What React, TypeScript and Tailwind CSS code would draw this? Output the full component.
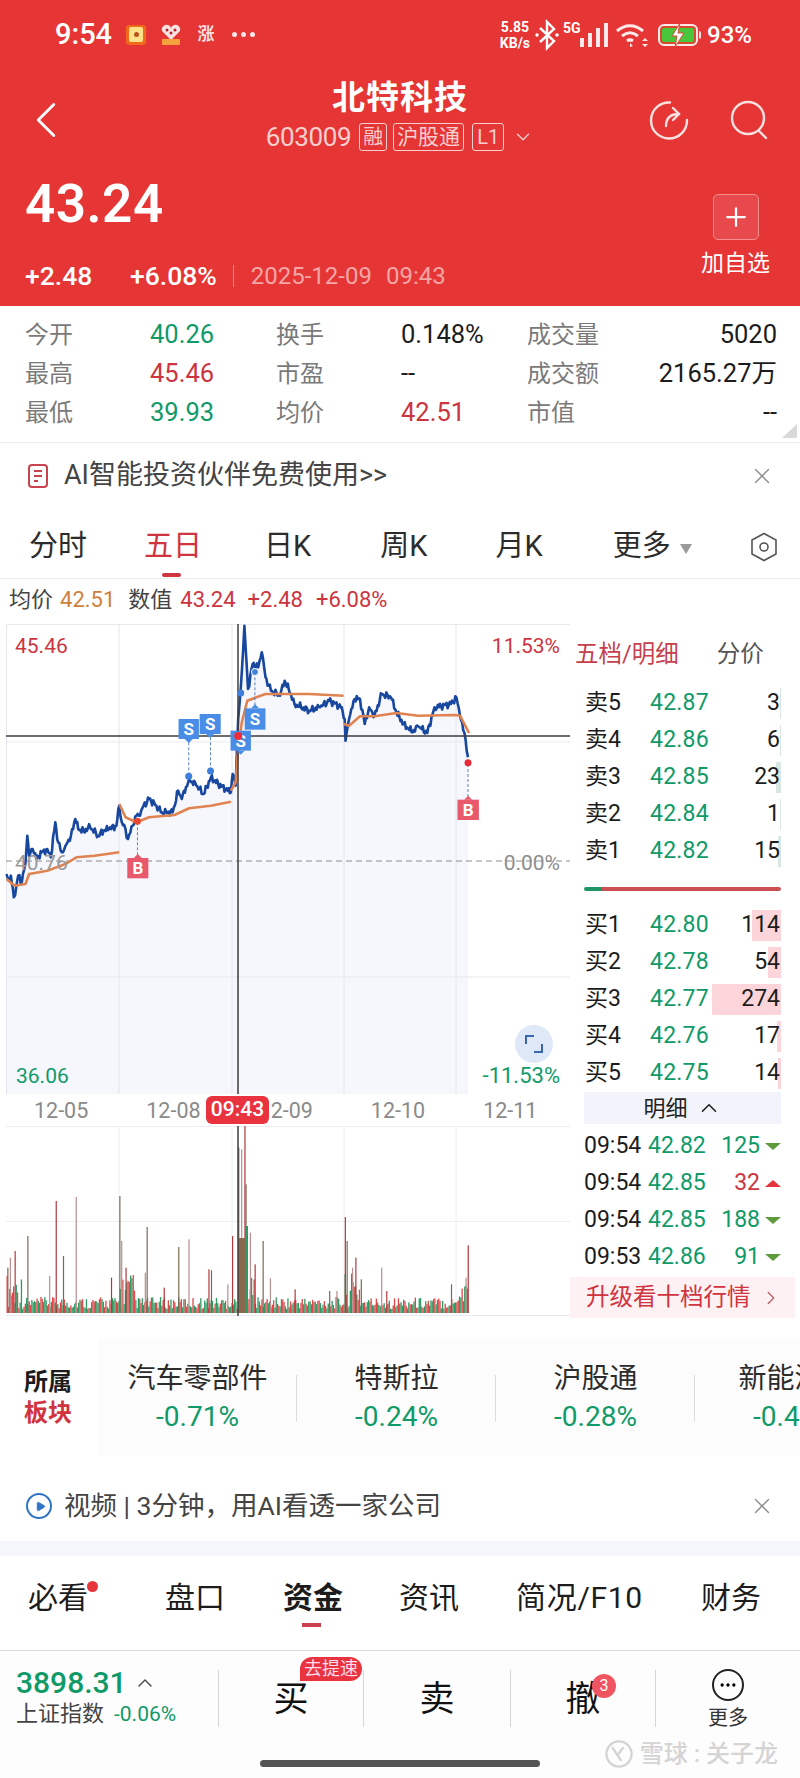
import { ChevronLeft, ChevronRight, ChevronDown, ChevronUp, Plus, X, Ellipsis, Play } from "lucide-react";

const GREEN = "text-[#0f9a68]";
const RED = "text-[#cc3440]";

// chart points were read off a 2.75x / 3x crop, hence the conversion
const fx = (x: number) => x / 2.75;
const fy = (y: number) => y / 3 - 15;

const bluePts = [
  [18, 795], [22, 810], [30, 800], [38, 865], [45, 830], [50, 800], [60, 820], [70, 760], [75, 680], [80, 740], [90, 720], [100, 750], [115, 730], [130, 720], [140, 745], [152, 640], [160, 700], [170, 730], [180, 710], [195, 680], [207, 630], [215, 660], [230, 665], [248, 655], [270, 680], [285, 665], [300, 660], [320, 650], [328, 590], [335, 640], [345, 660], [352, 690], [365, 650], [375, 620], [385, 620], [395, 590], [410, 570], [430, 590], [445, 610], [475, 610], [490, 545], [500, 570], [520, 510], [540, 530], [560, 555], [580, 505], [600, 525], [635, 550], [640, 495], [648, 530], [655, 330], [662, 240], [672, 50], [682, 240], [695, 165], [710, 175], [720, 130], [730, 205], [745, 245], [770, 260], [783, 215], [800, 255], [810, 285], [850, 305], [880, 295], [905, 275], [940, 295], [948, 330], [950, 395], [960, 330], [975, 270], [990, 270], [1003, 345], [1015, 295], [1030, 320], [1050, 255], [1075, 265], [1090, 310], [1110, 345], [1135, 370], [1150, 352], [1175, 372], [1195, 295], [1240, 285], [1255, 265], [1265, 320], [1280, 390], [1287, 445],
];

const avgSegs = [
  [[18, 810], [40, 830], [70, 825], [80, 795], [130, 785], [180, 765], [210, 745], [260, 740], [328, 730]],
  [[328, 585], [345, 625], [375, 640], [410, 625], [480, 618], [520, 598], [580, 590], [635, 578]],
  [[635, 545], [648, 520], [655, 420], [665, 340], [680, 275], [730, 255], [850, 255], [945, 260]],
  [[945, 345], [960, 350], [990, 322], [1030, 322], [1090, 312], [1150, 320], [1250, 318], [1265, 320], [1290, 372]],
];

function jagged(pts: number[][]) {
  const out: string[] = [];
  let n = 0;
  for (let i = 0; i < pts.length - 1; i++) {
    const [x0, y0] = pts[i];
    const [x1, y1] = pts[i + 1];
    const steps = Math.max(1, Math.round((x1 - x0) / 3));
    for (let s = 0; s < steps; s++) {
      const t = s / steps;
      n++;
      const noise = s === 0 ? 0 : Math.sin(n * 2.3) * 7 + Math.sin(n * 5.1) * 5;
      out.push(`${fx(x0 + (x1 - x0) * t).toFixed(1)},${fy(y0 + (y1 - y0) * t + noise).toFixed(1)}`);
    }
  }
  const last = pts[pts.length - 1];
  out.push(`${fx(last[0]).toFixed(1)},${fy(last[1]).toFixed(1)}`);
  return out.join(" ");
}

const toLine = (pts: number[][]) => pts.map(([x, y]) => `${fx(x).toFixed(1)},${fy(y).toFixed(1)}`).join(" ");

const spikes: [number, number][] = [
  [20, 540], [27, 510], [40, 490], [75, 445], [135, 565], [153, 340], [173, 505], [208, 328], [305, 570], [328, 325], [333, 460], [345, 540], [403, 418], [398, 555], [450, 600], [490, 478], [518, 455], [573, 545], [580, 548], [625, 590], [638, 445], [655, 180], [663, 185], [672, 115], [675, 290], [687, 435], [700, 530], [722, 460], [742, 572], [810, 605], [905, 610], [925, 610], [948, 388], [953, 460], [968, 540], [977, 510], [992, 575], [1048, 540], [1062, 610], [1240, 590], [1280, 570], [1286, 473],
];

function volumeBars() {
  const bars: { x: number; h: number; c: string }[] = [];
  let i = 0;
  for (let x = 6.5; x < 468; x += 1.3) {
    i++;
    const r = Math.abs(Math.sin(i * 12.9898) * 43758.5453) % 1;
    const nearOpen = [6.5, 119, 238, 344, 456].some((o) => x >= o && x < o + 16);
    const h = 4 + r * (nearOpen ? 36 : 12);
    bars.push({ x, h, c: Math.sin(i * 7.7) > 0.15 ? "#e0474a" : "#2f9a63" });
  }
  return bars;
}

function Marker({ x0, x1, y0, y1, label, up }: { x0: number; x1: number; y0: number; y1: number; label: string; up?: boolean }) {
  const l = fx(x0);
  const r = fx(x1);
  const t = fy(y0);
  const b = fy(y1);
  const c = (l + r) / 2;
  const fill = label === "S" ? "#4a8de6" : "#e85a6b";
  return (
    <g>
      <rect x={l} y={t} width={r - l} height={b - t} fill={fill} />
      {up ? (
        <polygon points={`${c - 4},${t} ${c + 4},${t} ${c},${t - 4}`} fill={fill} />
      ) : (
        <polygon points={`${c - 4},${b} ${c + 4},${b} ${c},${b + 4}`} fill={fill} />
      )}
      <text x={c} y={(t + b) / 2 + 6} textAnchor="middle" fontSize="17" fontWeight="700" fill="#fff" fontFamily="Roboto">
        {label}
      </text>
    </g>
  );
}

function Dash({ x, y0, y1 }: { x: number; y0: number; y1: number }) {
  return <line x1={fx(x)} x2={fx(x)} y1={fy(y0)} y2={fy(y1)} stroke="#5b7fb8" strokeWidth="1" strokeDasharray="3 2" />;
}

function PriceChart() {
  const blue = jagged(bluePts);
  return (
    <div className="relative h-[470px] w-[570px]">
      <svg width="570" height="470" className="absolute inset-0">
        <polygon points={`6.5,470 ${blue} 468,470`} fill="#f6f7fc" />
        {[0, 117.5, 352.5, 470].map((y) => (
          <line key={y} x1="6" x2="570" y1={y + 0.5} y2={y + 0.5} stroke="#e8e9ee" />
        ))}
        {[6.5, 119, 232, 344, 456].map((x) => (
          <line key={x} x1={x} x2={x} y1="0" y2="470" stroke="#e4e6ee" />
        ))}
        <line x1="6" x2="570" y1="237" y2="237" stroke="#8c8c8c" strokeDasharray="6 4" />
        <polyline points={blue} fill="none" stroke="#17479e" strokeWidth="2.6" strokeLinejoin="round" />
        {avgSegs.map((s, i) => (
          <polyline key={i} points={toLine(s)} fill="none" stroke="#e08350" strokeWidth="2.6" strokeLinejoin="round" />
        ))}
        <line x1="6" x2="570" y1="112" y2="112" stroke="#3d3d3d" strokeWidth="1.5" />
        <line x1="238" x2="238" y1="0" y2="470" stroke="#3d3d3d" strokeWidth="1.5" />
        <Dash x={519} y0={400} y1={500} />
        <Dash x={579} y0={385} y1={485} />
        <Dash x={701} y0={190} y1={290} />
        <Dash x={378} y0={640} y1={740} />
        <Dash x={1287} y0={465} y1={565} />
        <Marker x0={491} x1={547} y0={330} y1={390} label="S" />
        <Marker x0={549} x1={607} y0={315} y1={375} label="S" />
        <Marker x0={634} x1={690} y0={365} y1={425} label="S" />
        <Marker x0={673} x1={730} y0={298} y1={362} label="S" up />
        <Marker x0={350} x1={408} y0={747} y1={808} label="B" up />
        <Marker x0={1258} x1={1317} y0={572} y1={633} label="B" up />
        <circle cx={fx(519)} cy={fy(502)} r="3.5" fill="#3f80dd" />
        <circle cx={fx(579)} cy={fy(486)} r="3.5" fill="#3f80dd" />
        <circle cx={fx(662)} cy={fy(252)} r="3.5" fill="#3f80dd" />
        <circle cx={fx(701)} cy={fy(189)} r="3.5" fill="#3f80dd" stroke="#fff" />
        <circle cx={fx(378)} cy={fy(637)} r="3.5" fill="#e8482f" />
        <circle cx={fx(655)} cy={fy(381)} r="4" fill="#ee2c3c" />
        <circle cx={fx(1287)} cy={fy(461)} r="3.5" fill="#e8293a" />
      </svg>
      <span className={`absolute left-[15px] top-[10px] text-[21px] leading-6 ${RED}`}>45.46</span>
      <span className={`absolute right-[10px] top-[10px] text-[21px] leading-6 ${RED}`}>11.53%</span>
      <span className="absolute left-[15px] top-[227px] text-[21px] leading-6 text-[#9a9a9a]">40.76</span>
      <span className="absolute right-[10px] top-[227px] text-[21px] leading-6 text-[#8d8d8d]">0.00%</span>
      <span className={`absolute left-[16px] top-[440px] text-[21px] leading-6 ${GREEN}`}>36.06</span>
      <span className={`absolute right-[10px] top-[440px] text-[22px] leading-6 ${GREEN}`}>-11.53%</span>
      <div className="absolute left-[515px] top-[401px] flex h-[38px] w-[38px] items-center justify-center rounded-full bg-[#dfe8f7]">
        <svg width="20" height="20" viewBox="0 0 20 20" fill="none" stroke="#3a66b0" strokeWidth="2">
          <path d="M2 10V2h8M18 10v8h-8" />
        </svg>
      </div>
    </div>
  );
}

function VolumeChart() {
  return (
    <svg width="570" height="192" className="block">
      <line x1="6" x2="570" y1="0.5" y2="0.5" stroke="#eceef2" />
      <line x1="6" x2="570" y1="95.5" y2="95.5" stroke="#eceef2" />
      <line x1="6" x2="570" y1="189.5" y2="189.5" stroke="#e8e9ee" />
      {[119, 232, 344, 456].map((x) => (
        <line key={x} x1={x} x2={x} y1="0" y2="189" stroke="#eceef2" />
      ))}
      {volumeBars().map((b, i) => (
        <rect key={i} x={b.x} y={187 - b.h} width="1.3" height={b.h} fill={b.c} />
      ))}
      {spikes.map(([x, y], i) => (
        <rect key={x} x={fx(x)} y={(y - 115) / 3} width="1.2" height={187 - (y - 115) / 3} fill={i % 3 === 1 ? "#b98f8f" : i % 3 === 0 ? "#7a6a55" : "#b0393c"} />
      ))}
      <rect x="238" y="112" width="7" height="75" fill="#8a6a4e" />
      <rect x="245" y="100" width="3" height="87" fill="#2f9a63" />
      <line x1="238" x2="238" y1="0" y2="190" stroke="#3d3d3d" strokeWidth="1.5" />
    </svg>
  );
}

function DepthRow({ label, price, qty, bar, bg }: { label: string; price: string; qty: string; bar: number; bg: string }) {
  return (
    <div className="relative flex h-[37px] items-center pl-[15px] pr-[20px] text-[23px]">
      <span className="w-[65px] text-[#1c1c1c]">{label}</span>
      <span className={`${GREEN} tracking-[0.2px]`}>{price}</span>
      <span className="relative z-10 ml-auto text-[#1c1c1c]">{qty}</span>
      <span className={`absolute bottom-[3px] right-[19px] top-[3px] ${bg}`} style={{ width: bar }} />
    </div>
  );
}

function TradeRow({ time, price, qty, up }: { time: string; price: string; qty: string; up?: boolean }) {
  return (
    <div className="flex h-[37px] items-center pl-[14px] pr-[19px] text-[23px]">
      <span className="w-[64px] text-[#1c1c1c]">{time}</span>
      <span className={GREEN}>{price}</span>
      <span className={`ml-auto ${up ? RED : GREEN}`}>{qty}</span>
      <span
        className={`ml-[5px] h-0 w-0 border-x-[8px] border-x-transparent ${up ? "border-b-[7px] border-b-[#e8343c]" : "border-t-[7px] border-t-[#5f9a3c]"}`}
      />
    </div>
  );
}

function SidePanel() {
  const sells: [string, string, string, number][] = [
    ["卖5", "42.87", "3", 1],
    ["卖4", "42.86", "6", 1],
    ["卖3", "42.85", "23", 5],
    ["卖2", "42.84", "1", 1],
    ["卖1", "42.82", "15", 3],
  ];
  const buys: [string, string, string, number][] = [
    ["买1", "42.80", "114", 29],
    ["买2", "42.78", "54", 13],
    ["买3", "42.77", "274", 69],
    ["买4", "42.76", "17", 4],
    ["买5", "42.75", "14", 3],
  ];
  return (
    <div className="w-[230px]">
      <div className="flex h-[61px] items-center pl-[5px] text-[23.5px]">
        <span className="text-[#c5404d]">五档/明细</span>
        <span className="ml-[38px] text-[#555]">分价</span>
      </div>
      {sells.map(([l, p, q, b]) => (
        <DepthRow key={l} label={l} price={p} qty={q} bar={b} bg="bg-[#d9e7e3]" />
      ))}
      <div className="flex h-[37px] items-center pl-[14px] pr-[19px]">
        <div className="h-1 w-[18px] rounded-l-full bg-[#1f9464]" />
        <div className="h-1 flex-1 rounded-r-full bg-[#cc4f55]" />
      </div>
      {buys.map(([l, p, q, b]) => (
        <DepthRow key={l} label={l} price={p} qty={q} bar={b} bg="bg-[#fbd5da]" />
      ))}
      <div className="ml-[14px] mr-[19px] flex h-[32px] items-center justify-center gap-[8px] bg-[#f3f4fb] text-[22px] text-[#222]">
        明细
        <ChevronUp size={26} strokeWidth={1.5} />
      </div>
      <div className="pt-[4px]">
        <TradeRow time="09:54" price="42.82" qty="125" />
        <TradeRow time="09:54" price="42.85" qty="32" up />
        <TradeRow time="09:54" price="42.85" qty="188" />
        <TradeRow time="09:53" price="42.86" qty="91" />
      </div>
      <div className="mr-[5px] mt-[1px] flex h-[41px] items-center bg-[#fdf1f3] pl-[16px] pr-[13px] text-[23.5px] text-[#d0343f]">
        升级看十档行情
        <ChevronRight className="ml-auto text-[#b9646b]" size={22} strokeWidth={1.5} />
      </div>
    </div>
  );
}

function StatusBar() {
  return (
    <div className="flex h-[68px] items-center pl-[55px] pr-[48px] pt-[1px] text-white">
      <span className="text-[29px] font-medium">9:54</span>
      <div className="ml-[14px] flex h-[20px] w-[20px] items-center justify-center rounded-[3px] bg-[#f2691c]">
        <div className="flex h-[15px] w-[14px] items-center justify-center rounded-[2px] bg-[#fde28a]">
          <div className="h-[5px] w-[5px] rounded-full bg-[#b5561a]" />
        </div>
      </div>
      <svg className="ml-[15px]" width="20" height="22" viewBox="0 0 20 22">
        <path d="M10 16 1 7a4.500 4.500 0 0 1 9-3 4.500 4.500 0 0 1 9 3z" fill="#fbe2e2" />
        <circle cx="6" cy="6" r="1.500" fill="#b5262c" />
        <circle cx="10" cy="9" r="1.500" fill="#b5262c" />
        <circle cx="14" cy="6" r="1.500" fill="#b5262c" />
        <rect x="1" y="15" width="18" height="6" rx="1" fill="#f6a23c" />
      </svg>
      <span className="ml-[16px] flex h-[22px] w-[18px] items-center justify-center text-[17px] font-bold leading-none text-[#fbdede]">涨</span>
      <div className="ml-[17px] flex gap-[4px]">
        {[0, 1, 2].map((i) => (
          <div key={i} className="h-[5px] w-[5px] rounded-full bg-[#fbe6e6]" />
        ))}
      </div>
      <div className="ml-auto flex items-center">
        <div className="text-center text-[14px] font-bold leading-[16px]">
          5.85
          <br />
          KB/s
        </div>
        <svg className="ml-[4px]" width="26" height="32" viewBox="0 0 26 32" fill="none" stroke="#fff" strokeWidth="2.4">
          <path d="M6 9 20 22l-7 7V3l7 7L6 23" />
          <circle cx="3" cy="16" r="1.800" fill="#fff" stroke="none" />
          <circle cx="23" cy="16" r="1.800" fill="#fff" stroke="none" />
        </svg>
        <div className="relative ml-[3px] flex h-[24px] w-[45px] items-end justify-end gap-[4px]">
          <span className="absolute left-0 top-[-2px] text-[14px] font-bold leading-none">5G</span>
          {["h-[9px]", "h-[14px]", "h-[19px]", "h-[24px]"].map((h) => (
            <div key={h} className={`w-[4px] bg-[#fde9e9] ${h}`} />
          ))}
        </div>
        <svg className="ml-[8px]" width="33" height="24" viewBox="0 0 33 24" fill="none" stroke="#fde9e9" strokeWidth="3">
          <path d="M1 8c8-7 18-7 26 0M6 13c5-4 11-4 16 0M11 18c2-1.500 4-1.500 6 0" />
          <path d="m14 20 3 3-3 1zM29 15l-3 3h6zM29 24l-3-3h6z" fill="#fde9e9" stroke="none" />
        </svg>
        <div className="relative ml-[9px] flex h-[22px] w-[40px] items-center justify-center rounded-[6px] border-2 border-[#fde9e9] bg-[#d94a30]">
          <div className="h-[14px] w-[32px] rounded-[2px] bg-[#49c63c]" />
          <svg className="absolute left-[8px] top-[-4px]" width="20" height="26" viewBox="0 0 20 26">
            <path d="M12 1 4 14h5l-2 11 9-14h-6z" fill="#fff" stroke="#d94a30" strokeWidth="1" />
          </svg>
        </div>
        <div className="ml-[1px] h-[8px] w-[2px] rounded-r bg-[#fde9e9]" />
        <span className="ml-[6px] text-[24px] font-medium">93%</span>
      </div>
    </div>
  );
}

function Header() {
  return (
    <div className="h-[306px] bg-[#e53535] text-white">
      <StatusBar />
      <div className="grid h-[94px] grid-cols-[1fr_auto_1fr] items-center">
        <div className="pl-[15px] pt-[10px]">
          <ChevronLeft size={62} strokeWidth={1.1} />
        </div>
        <div className="pb-[4px] text-center">
          <div className="text-[33px] font-semibold leading-[43px] tracking-[1px]">北特科技</div>
          <div className="mt-[4px] flex items-center justify-center text-[#f7cfcf]">
            <span className="text-[26px] leading-[28px] tracking-[-0.4px]">603009</span>
            <span className="ml-[8px] rounded-[3px] border border-[#f7cfcf] px-[3px] text-[20px] leading-[26px]">融</span>
            <span className="ml-[6px] rounded-[3px] border border-[#f7cfcf] px-[3px] text-[21px] leading-[26px]">沪股通</span>
            <span className="ml-[8px] rounded-[3px] border border-[#f7cfcf] px-[4px] text-[20px] leading-[26px]">L1</span>
            <ChevronDown className="ml-[8px]" size={22} strokeWidth={1.5} />
          </div>
        </div>
        <div className="flex items-center justify-end gap-[41px] pr-[32px] pt-[10px] text-[#fbe0e0]">
          <svg width="40" height="40" viewBox="0 0 40 40" fill="none" stroke="currentColor" strokeWidth="2.4" strokeLinecap="round">
            <path d="M21 2.500A18 18 0 1 0 38 20" />
            <path d="M17 26c0-8 4-12 13-12M24 8l6 6-6 6" />
          </svg>
          <svg width="38" height="40" viewBox="0 0 38 40" fill="none" stroke="currentColor" strokeWidth="2.4" strokeLinecap="round">
            <circle cx="18" cy="18" r="16" />
            <path d="m29 31 7 7" />
          </svg>
        </div>
      </div>
      <div className="flex items-start pl-[25px] pr-[30px]">
        <div>
          <div className="mt-[9px] text-[53px] font-semibold leading-[66px] tracking-[0.5px]">43.24</div>
          <div className="mt-[23px] flex items-center text-[26.5px] leading-[32px]">
            <span className="w-[105px] font-medium">+2.48</span>
            <span className="font-medium">+6.08%</span>
            <span className="ml-[16px] h-[22px] w-px bg-[#f08a8a]" />
            <span className="ml-[17px] text-[24px] text-[#f3a6a6]">2025-12-09</span>
            <span className="ml-[14px] text-[24px] text-[#f3a6a6]">09:43</span>
          </div>
        </div>
        <div className="ml-auto mt-[32px] flex flex-col items-center">
          <div className="flex h-[46px] w-[46px] items-center justify-center rounded-[5px] border border-[#f0908f] bg-[#e8494c]">
            <Plus size={30} strokeWidth={1.8} />
          </div>
          <span className="mt-[10px] text-[23px] leading-[28px]">加自选</span>
        </div>
      </div>
    </div>
  );
}

function Stats() {
  const rows = [
    ["今开", "40.26", GREEN, "换手", "0.148%", "text-[#1c1c1c]", "成交量", "5020"],
    ["最高", "45.46", RED, "市盈", "--", "text-[#1c1c1c]", "成交额", "2165.27万"],
    ["最低", "39.93", GREEN, "均价", "42.51", RED, "市值", "--"],
  ];
  return (
    <div className="relative h-[137px] border-b border-[#ececef] pl-[25px] pr-[23px] pt-[9px]">
      {rows.map(([a, b, bc, c, d, dc, e, f]) => (
        <div key={a} className="grid h-[39px] grid-cols-[125px_126px_125px_126px_90px_1fr] items-center text-[25.5px]">
          <span className="text-[24px] text-[#7a7a7a]">{a}</span>
          <span className={bc}>{b}</span>
          <span className="text-[24px] text-[#7a7a7a]">{c}</span>
          <span className={dc}>{d}</span>
          <span className="text-[24px] text-[#7a7a7a]">{e}</span>
          <span className="text-right text-[#1c1c1c]">{f}</span>
        </div>
      ))}
      <div className="absolute bottom-[4px] right-[3px] h-0 w-0 border-b-[14px] border-l-[15px] border-b-[#d9d9d9] border-l-transparent" />
    </div>
  );
}

function Notice({ icon, text, h, size }: { icon: React.ReactNode; text: string; h: string; size: string }) {
  return (
    <div className={`flex items-center pl-[26px] pr-[25px] ${h}`}>
      <div className="flex w-[38px] items-center">{icon}</div>
      <span className={`text-[#444] ${size}`}>{text}</span>
      <X className="ml-auto text-[#8a8a8a]" size={26} strokeWidth={1.2} />
    </div>
  );
}

function RangeTabs() {
  return (
    <div className="relative flex h-[75px] items-center border-b border-[#ececef] pt-[12px] text-[29px] text-[#2c2c2c]">
      <span className="ml-[29px]">分时</span>
      <span className="ml-[57px] text-[#d0343f]">五日</span>
      <span className="ml-[62px]">日K</span>
      <span className="ml-[69px]">周K</span>
      <span className="ml-[68px]">月K</span>
      <span className="ml-[70px]">更多</span>
      <span className="ml-[9px] mt-[3px] h-0 w-0 border-x-[6px] border-t-[10px] border-x-transparent border-t-[#9a9a9a]" />
      <svg className="ml-auto mr-[22px]" width="28" height="30" viewBox="0 0 28 30" fill="none" stroke="#555" strokeWidth="1.6">
        <path d="M14 1.500 26 8v14l-12 6.500L2 22V8z" />
        <circle cx="14" cy="15" r="4" />
      </svg>
      <div className="absolute bottom-[1px] left-[162px] h-[4px] w-[19px] rounded-full bg-[#d0343f]" />
    </div>
  );
}

function Sectors() {
  const items = [
    ["汽车零部件", "-0.71%"],
    ["特斯拉", "-0.24%"],
    ["沪股通", "-0.28%"],
    ["新能源车", "-0.45%"],
  ];
  return (
    <div className="mt-[21px] flex h-[117px] overflow-hidden">
      <div className="flex w-[98px] shrink-0 flex-col items-center justify-center pr-[2px] text-[24px] font-bold leading-[31px]">
        <span className="text-[#1c1c1c]">所属</span>
        <span className="text-[#d0343f]">板块</span>
      </div>
      <div className="flex min-w-0 flex-1 bg-[#fdfcfd]">
        {items.map(([n, p], i) => (
          <div key={n} className="relative flex w-[199px] shrink-0 flex-col items-center justify-center">
            <span className="whitespace-nowrap text-[28px] leading-[38px] text-[#2c2c2c]">{n}</span>
            <span className={`text-[28px] leading-[38px] ${GREEN}`}>{p}</span>
            {i < 3 && <div className="absolute right-0 top-[36px] h-[47px] w-px bg-[#dcdcdc]" />}
          </div>
        ))}
      </div>
    </div>
  );
}

function BottomTabs() {
  return (
    <div className="relative flex h-[95px] items-center border-b border-[#d9d9d9] pb-[11px] text-[30px] text-[#1c1c1c]">
      <span className="ml-[28px]">必看</span>
      <span className="ml-[77px]">盘口</span>
      <span className="ml-[58px] font-bold">资金</span>
      <span className="ml-[56px]">资讯</span>
      <span className="ml-[57px] tracking-[0.7px]">简况/F10</span>
      <span className="ml-[58px]">财务</span>
      <div className="absolute left-[87px] top-[25px] h-[11px] w-[11px] rounded-full bg-[#e8343c]" />
      <div className="absolute left-[302px] top-[67px] h-[4px] w-[19px] bg-[#cc3f4c]" />
    </div>
  );
}

function ActionBar() {
  return (
    <div className="relative h-[129px] bg-[#fefdfd]">
      <div className="flex h-[76px] items-start">
        <div className="w-[218px] pl-[16px] pt-[14px]">
          <div className={`flex items-center text-[30px] font-medium leading-[36px] ${GREEN}`}>
            3898.31
            <ChevronUp className="ml-[6px] text-[#444]" size={24} strokeWidth={1.4} />
          </div>
          <div className="flex items-center leading-[26px]">
            <span className="text-[22px] text-[#444]">上证指数</span>
            <span className={`ml-[10px] text-[21px] ${GREEN}`}>-0.06%</span>
          </div>
        </div>
        <div className="mt-[19px] grid h-[55px] w-[438px] grid-cols-[145px_147px_146px] text-[35px] text-[#111]">
          <div className="relative flex items-center justify-center border-l border-[#d6d6d6] pt-[4px]">
            买
            <span className="absolute left-[81px] top-[-13px] flex h-[24px] w-[62px] items-center justify-center rounded-[12px] rounded-bl-none bg-[#e9343f] text-[18px] leading-none text-[#fde]">去提速</span>
          </div>
          <div className="flex items-center justify-center border-l border-[#d6d6d6] pt-[4px]">卖</div>
          <div className="relative flex items-center justify-center border-x border-[#d6d6d6] pt-[4px]">
            撤
            <span className="absolute left-[81px] top-[4px] flex h-[24px] w-[24px] items-center justify-center rounded-full bg-[#ef5560] text-[16px] leading-none text-white">3</span>
          </div>
        </div>
        <div className="flex flex-1 flex-col items-center pt-[18px]">
          <div className="flex h-[32px] w-[32px] items-center justify-center rounded-full border-2 border-[#222]">
            <Ellipsis size={20} strokeWidth={2} />
          </div>
          <span className="mt-[4px] text-[20px] leading-[26px] text-[#333]">更多</span>
        </div>
      </div>
      <div className="absolute bottom-[13px] left-[260px] h-[7px] w-[280px] rounded-full bg-[#555]" />
      <div className="absolute bottom-[10px] right-[22px] flex items-center gap-[5px] text-[24px] font-medium leading-[32px] text-[#d4d4d4]">
        <svg width="32" height="32" viewBox="0 0 28 28" fill="none" stroke="#d4d4d4" strokeWidth="2">
          <circle cx="14" cy="14" r="11" />
          <path d="m8 8 8 12M18 8l-6 8" />
        </svg>
        雪球 : 关子龙
      </div>
    </div>
  );
}

export default function App() {
  return (
    <div className="h-[1778px] w-[800px] overflow-hidden bg-white font-['Roboto','Noto_Sans_CJK_SC',sans-serif]">
      <Header />
      <Stats />
      <Notice
        h="h-[61px] pt-[4px]"
        size="text-[27px]"
        text="AI智能投资伙伴免费使用>>"
        icon={
          <svg width="24" height="26" viewBox="0 0 24 26" fill="none" stroke="#c9434f" strokeWidth="2">
            <rect x="3" y="2" width="18" height="22" rx="3" />
            <path d="M8 8h8M8 13h8M8 18h4" />
          </svg>
        }
      />
      <RangeTabs />
      <div className="flex h-[45px] items-start pl-[9px] pt-[6px] text-[22px] leading-[30px]">
        <span className="text-[#444]">均价</span>
        <span className="ml-[7px] text-[#cf7f3c]">42.51</span>
        <span className="ml-[13px] text-[#444]">数值</span>
        <span className={`ml-[8px] ${RED}`}>43.24</span>
        <span className={`ml-[12px] ${RED}`}>+2.48</span>
        <span className={`ml-[13px] ${RED}`}>+6.08%</span>
      </div>
      <div className="flex">
        <div className="relative w-[570px]">
          <PriceChart />
          <div className="relative flex h-[32px] items-center pt-[3px] text-[21.5px] text-[#8a8a8a]">
            <span className="ml-[34px]">12-05</span>
            <span className="ml-[58px]">12-08</span>
            <span className="ml-[58px]">12-09</span>
            <span className="ml-[58px]">12-10</span>
            <span className="ml-[58px]">12-11</span>
            <span className="absolute left-[206px] top-[2px] flex h-[28px] w-[63px] items-center justify-center rounded-[6px] bg-[#e9343f] text-[21px] font-medium text-white">09:43</span>
          </div>
          <VolumeChart />
        </div>
        <SidePanel />
      </div>
      <Sectors />
      <Notice
        h="h-[85px] pt-[15px]"
        size="text-[26.5px]"
        text="视频 | 3分钟，用AI看透一家公司"
        icon={
          <div className="flex h-[26px] w-[26px] items-center justify-center rounded-full border-2 border-[#2f73c4]">
            <Play className="ml-[2px] fill-[#2f73c4] text-[#2f73c4]" size={11} />
          </div>
        }
      />
      <div className="h-[15px] bg-[#f5f6fc]" />
      <BottomTabs />
      <ActionBar />
    </div>
  );
}
